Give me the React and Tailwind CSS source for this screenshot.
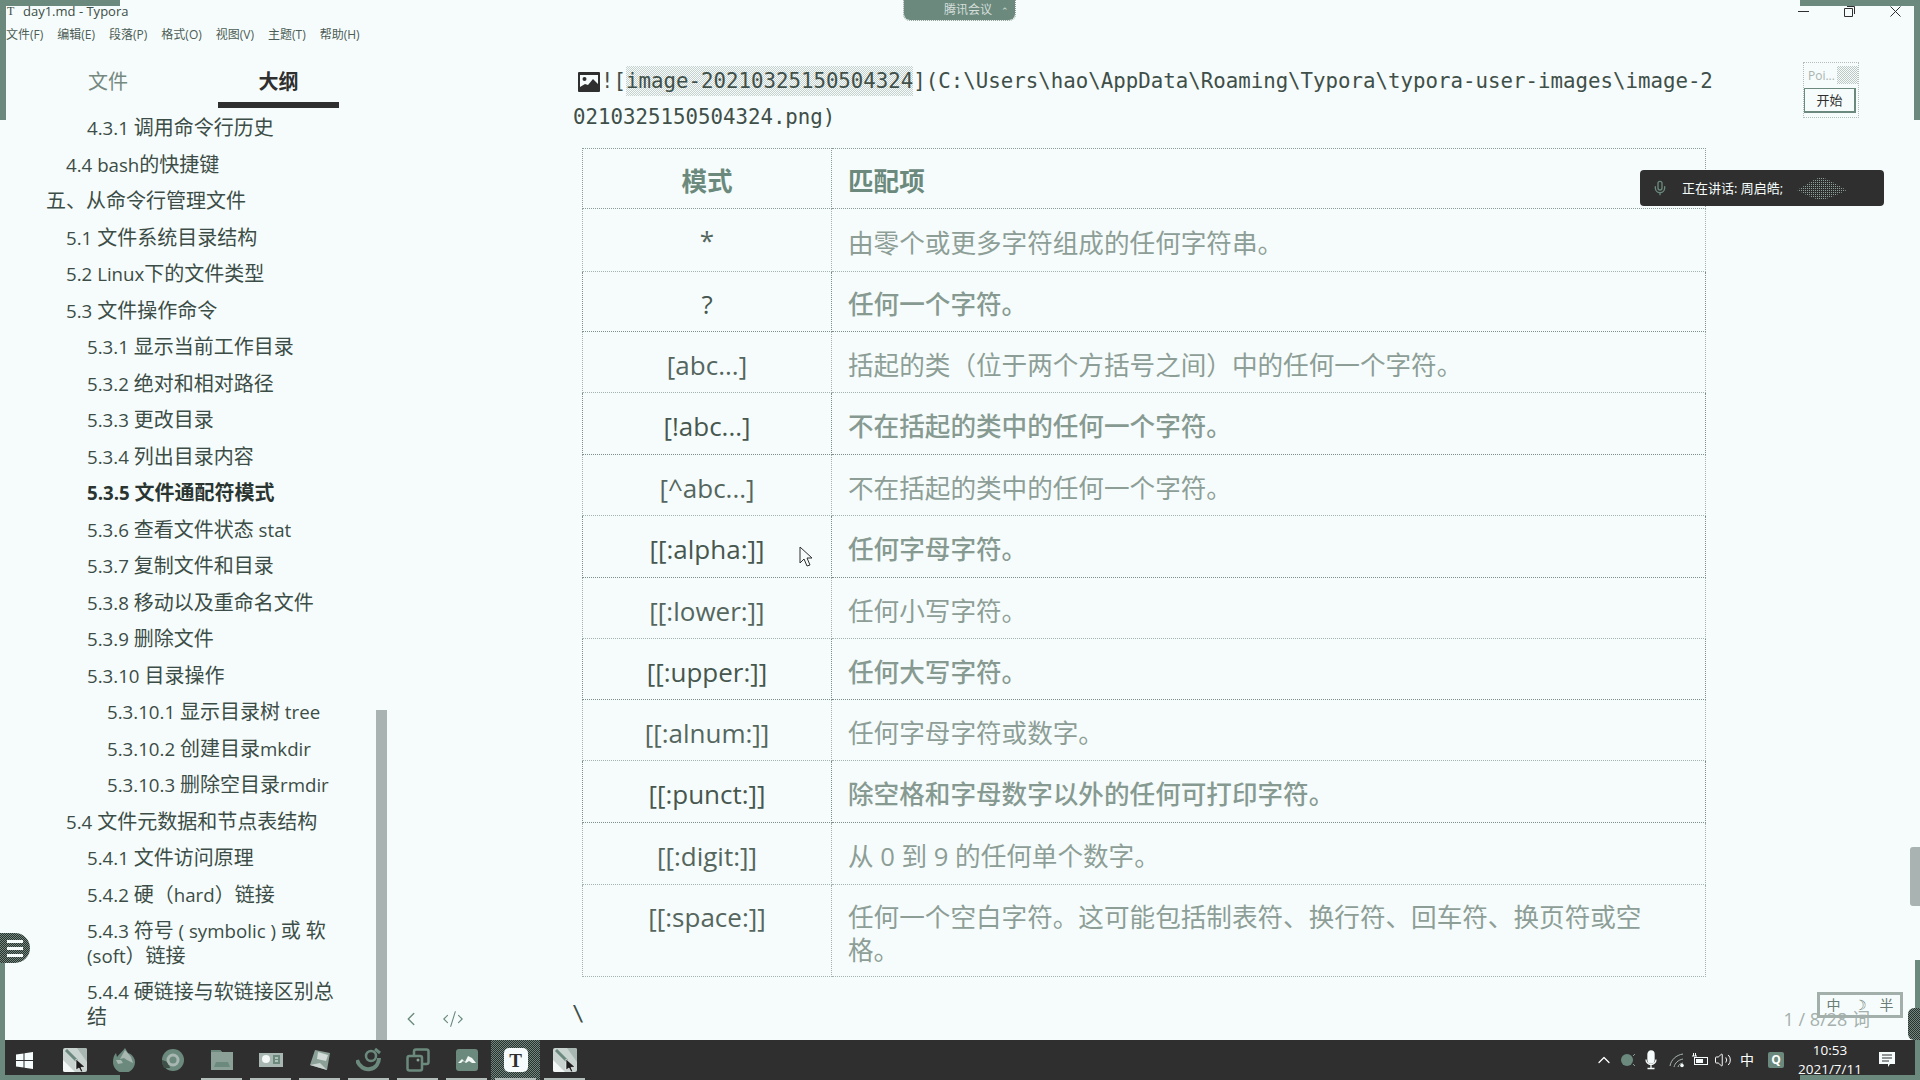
import React from "react";
import { ChevronLeft, ChevronUp, Code2, Mic, Volume2 } from "lucide-react";

const outline = [
  [87, "4.3.1 调用命令行历史"],
  [66, "4.4 bash的快捷键"],
  [46, "五、从命令行管理文件"],
  [66, "5.1 文件系统目录结构"],
  [66, "5.2 Linux下的文件类型"],
  [66, "5.3 文件操作命令"],
  [87, "5.3.1 显示当前工作目录"],
  [87, "5.3.2 绝对和相对路径"],
  [87, "5.3.3 更改目录"],
  [87, "5.3.4 列出目录内容"],
  [87, "5.3.5 文件通配符模式", true],
  [87, "5.3.6 查看文件状态 stat"],
  [87, "5.3.7 复制文件和目录"],
  [87, "5.3.8 移动以及重命名文件"],
  [87, "5.3.9 删除文件"],
  [87, "5.3.10 目录操作"],
  [107, "5.3.10.1 显示目录树 tree"],
  [107, "5.3.10.2 创建目录mkdir"],
  [107, "5.3.10.3 删除空目录rmdir"],
  [66, "5.4 文件元数据和节点表结构"],
  [87, "5.4.1 文件访问原理"],
  [87, "5.4.2 硬（hard）链接"],
  [87, "5.4.3 符号 ( symbolic ) 或 软 (soft）链接"],
  [87, "5.4.4 硬链接与软链接区别总结"],
];

const rows = [
  ["*", "由零个或更多字符组成的任何字符串。", "h-[63px]"],
  ["?", "任何一个字符。", "h-[60px]", true],
  ["[abc...]", "括起的类（位于两个方括号之间）中的任何一个字符。", "h-[61px]"],
  ["[!abc...]", "不在括起的类中的任何一个字符。", "h-[62px]", true],
  ["[^abc...]", "不在括起的类中的任何一个字符。", "h-[61px]"],
  ["[[:alpha:]]", "任何字母字符。", "h-[62px]", true],
  ["[[:lower:]]", "任何小写字符。", "h-[61px]"],
  ["[[:upper:]]", "任何大写字符。", "h-[61px]", true],
  ["[[:alnum:]]", "任何字母字符或数字。", "h-[61px]"],
  ["[[:punct:]]", "除空格和字母数字以外的任何可打印字符。", "h-[62px]", true],
  ["[[:digit:]]", "从 0 到 9 的任何单个数字。", "h-[62px]"],
  ["[[:space:]]", "任何一个空白字符。这可能包括制表符、换行符、回车符、换页符或空格。", "h-[92px]"],
];

const menus = ["文件(F)", "编辑(E)", "段落(P)", "格式(O)", "视图(V)", "主题(T)", "帮助(H)"];

const dither = "bg-[repeating-conic-gradient(#6b8a7d_0_25%,#2f2f2f_0_50%)] bg-[length:2px_2px]";

// latin runs in the outline are set a bit smaller than the CJK around them
const OutlineLabel = ({ text }) =>
  text.split(/([\x20-\x7e]+)/).map((part, i) =>
    /^[\x20-\x7e]+$/.test(part) ? (
      <span key={i} className="text-[18.700px] leading-none">{part}</span>
    ) : (
      part
    )
  );

const SnipIcon = () => (
  <svg width="24" height="24" viewBox="0 0 24 24">
    <rect width="24" height="24" rx="2" fill="#c9d3cf" />
    <path d="M0 12L12 24H2a2 2 0 0 1-2-2z" fill="#f4f8f7" />
    <path d="M14 0h8a2 2 0 0 1 2 2v12z" fill="#a9b7b2" />
    <path d="M3 2L14 13" stroke="#6b8a7d" strokeWidth="3" />
    <path d="M13 11l9 8-4 .5 2 4-2 .5-2-4-3 2z" fill="#1f1f1f" stroke="#fff" strokeWidth=".6" />
  </svg>
);

const FoxIcon = () => (
  <svg width="24" height="24" viewBox="0 0 24 24">
    <path d="M13 0l3 5c4 1 7 5 7 9a11 11 0 0 1-22 0c0-4 1-7 3-9l1 4c2-3 5-5 8-9z" fill="#6b8a7d" />
    <path d="M13 2l6 7 2 6-6-3-3-2-4 1z" fill="#a9b7b2" />
    <path d="M4 12l5 0 2 3-5 1z" fill="#a9b7b2" />
  </svg>
);

const ChromeIcon = () => (
  <svg width="24" height="24" viewBox="0 0 24 24">
    <circle cx="12" cy="12" r="11" fill="#6b8a7d" />
    <path d="M3 20a11 11 0 0 1-2-8l6 2 2 6z" fill="#3f5048" />
    <circle cx="12" cy="12" r="6.500" fill="#a9b7b2" />
    <circle cx="12" cy="12" r="3.500" fill="#6b8a7d" />
  </svg>
);

const FolderIcon = () => (
  <svg width="24" height="24" viewBox="0 0 24 24">
    <path d="M1 2h9l2 2h11v18H1z" fill="#8ba096" />
    <path d="M1 2h9l2 2H1z" fill="#6b8a7d" />
    <path d="M6 14h12l2 5H4z" fill="#6b8a7d" />
  </svg>
);

const CardIcon = () => (
  <svg width="24" height="24" viewBox="0 0 24 24">
    <rect y="5" width="24" height="14" fill="#a9b7b2" />
    <circle cx="7" cy="11" r="4" fill="#f4f8f7" />
    <rect x="14" y="7" width="7" height="9" fill="#6b8a7d" />
    <path d="M16 10h3M16 13h3" stroke="#f4f8f7" />
  </svg>
);

const NoteIcon = () => (
  <svg width="24" height="24" viewBox="0 0 24 24">
    <path d="M7 2l15 3-3 17L2 17z" fill="#8ba096" />
    <path d="M10 4l10 3-2 6-9-2z" fill="#d3dcd8" />
    <path d="M2 17l10-2 7 7z" fill="#c9d3cf" />
  </svg>
);

const SpiralIcon = () => (
  <svg width="26" height="26" viewBox="0 0 26 26" fill="none" stroke="#6b8a7d">
    <path d="M1 13c2 7 8 10 13 9 6-1 9-6 9-11" strokeWidth="4" />
    <circle cx="15" cy="9" r="5" strokeWidth="2.500" />
    <path d="M19 2l5 4" strokeWidth="3" />
  </svg>
);

const StackIcon = () => (
  <svg width="24" height="24" viewBox="0 0 24 24" fill="none" stroke="#6b8a7d" strokeWidth="2.500">
    <rect x="8" y="1.500" width="14.500" height="14.500" rx="2" />
    <rect x="1.500" y="8" width="14.500" height="14.500" rx="2" fill="#2f2f2f" />
    <circle cx="12" cy="12" r="1.500" fill="#8ba096" stroke="none" />
  </svg>
);

const PeakIcon = () => (
  <svg width="22" height="22" viewBox="0 0 22 22">
    <rect width="22" height="22" rx="3" fill="#6b8a7d" />
    <path d="M2 14l4-4 3 3 3-6 4 2 4 5-4 0-3-2-3 2-3-2-2 2z" fill="#f4f8f7" />
  </svg>
);

const TypeIcon = () => (
  <div className="flex h-[24px] w-[24px] items-center justify-center rounded-[5px] bg-[#f6fcfb] font-['Liberation_Serif',serif] text-[19px] font-bold leading-none text-[#2f2f2f]">
    T
  </div>
);

const apps = [
  { icon: <SnipIcon /> },
  { icon: <FoxIcon /> },
  { icon: <ChromeIcon /> },
  { icon: <FolderIcon />, mark: true },
  { icon: <CardIcon />, mark: true },
  { icon: <NoteIcon />, mark: true },
  { icon: <SpiralIcon />, mark: true },
  { icon: <StackIcon />, mark: true },
  { icon: <PeakIcon />, mark: true },
  { icon: <TypeIcon />, mark: true, active: true },
  { icon: <SnipIcon />, mark: true },
];

const App = () => {
  return (
    <div className="relative flex h-screen w-[1920px] flex-col overflow-hidden bg-[#f6fcfb] font-['Open_Sans','Noto_Sans_CJK_SC',sans-serif] text-[#3c4d47]">
      {/* title bar */}
      <div className="flex h-[24px] items-center pb-[2px] pl-[7px] text-[13px] leading-none">
        <span className="w-[16px] font-['Liberation_Serif',serif] text-[12px]">T</span>
        <span>day1.md - Typora</span>
        <div className="ml-auto flex pr-[2px] text-[#2f2f2f]">
          <span className="flex h-[20px] w-[46px] items-center justify-center">
            <svg width="11" height="11" viewBox="0 0 11 11"><path d="M0 5.500h11" stroke="currentColor" /></svg>
          </span>
          <span className="flex h-[20px] w-[46px] items-center justify-center">
            <svg width="11" height="11" viewBox="0 0 11 11" fill="none" stroke="currentColor"><path d="M.5 2.500h8v8h-8zM3 .5h7.500V8" /></svg>
          </span>
          <span className="flex h-[20px] w-[46px] items-center justify-center">
            <svg width="11" height="11" viewBox="0 0 11 11" stroke="currentColor"><path d="M.5.5l10 10M10.500.5l-10 10" /></svg>
          </span>
        </div>
      </div>
      <div className="flex h-[22px] items-center gap-[14px] pl-[6px] text-[12px] leading-none text-[#4c5c56]">
        {menus.map((m) => (
          <span key={m}>{m}</span>
        ))}
      </div>

      <div className="flex min-h-0 flex-1">
        {/* sidebar */}
        <aside className="flex w-[376px] shrink-0 flex-col overflow-hidden">
          <div className="flex shrink-0 pl-[48px] text-[20px] leading-none">
            <div className="flex h-[62px] w-[120px] items-center justify-center pt-[16px] pb-[6px] text-[#75897f]">文件</div>
            <div className="ml-[50px] flex h-[62px] w-[121px] items-center justify-center border-b-[6px] border-[#2f2f2f] pt-[16px] font-bold text-[#2f2f2f]">大纲</div>
          </div>
          <ul className="pt-[8px] pr-[40px] text-[20px] leading-[24.5px]">
            {outline.map(([indent, label, bold]) => (
              <li
                key={label}
                style={{ paddingLeft: indent }}
                className={bold ? "mb-[12px] font-bold text-[#2a3531]" : "mb-[12px]"}
              >
                <OutlineLabel text={label} />
              </li>
            ))}
          </ul>
        </aside>
        <div className="flex w-[11px] shrink-0 flex-col justify-end">
          <div className="h-[330px] bg-[#a9b3b1]" />
        </div>

        {/* editor */}
        <main className="flex min-w-0 flex-1 flex-col">
          <div className="min-h-0 flex-1 pt-[17px] pl-[186px]">
            <p className="w-[1145px] break-all font-['DejaVu_Sans_Mono',monospace] text-[20.750px] leading-[36px] text-[#3f4f49]">
              <svg className="mr-[1px] ml-[5px] inline-block align-[-4px]" width="22" height="20" viewBox="0 0 22 20">
                <rect width="22" height="20" rx="1" fill="#2f2f2f" />
                <rect x="2" y="3" width="18" height="12" fill="#f6fcfb" />
                <circle cx="6.500" cy="7" r="2" fill="#2f2f2f" />
                <path d="M2 15l5-3 3 1 5-6 5 5v3z" fill="#2f2f2f" />
              </svg>
              ![
              <span className="bg-[repeating-conic-gradient(#c6d0cc_0_25%,#f6fcfb_0_50%)] bg-[length:2px_2px] py-[3px]">image-20210325150504324</span>
              ](C:\Users\hao\AppData\Roaming\Typora\typora-user-images\image-20210325150504324.png)
            </p>
            <table className="mt-[13px] ml-[9px] w-[1124px] table-fixed border-collapse">
              <colgroup>
                <col className="w-[249px]" />
                <col />
              </colgroup>
              <thead>
                <tr className="h-[60px] text-[25.600px] leading-[33px]">
                  <th className="border border-dotted border-[#8d9c96] pt-[6px] font-bold text-[#6b8a7d]">模式</th>
                  <th className="border border-dotted border-[#8d9c96] pt-[6px] pl-[16px] text-left font-bold text-[#6b8a7d]">匹配项</th>
                </tr>
              </thead>
              <tbody>
                {rows.map(([pattern, desc, height, strong], i) => (
                  <tr key={pattern} className={`${height} text-[25.600px] leading-[33px]`}>
                    <td className={strong ? "border border-dotted border-[#7f8f88] pt-[6px] text-center text-[26px] font-medium text-[#46574f]" : i === rows.length - 1 ? "border border-dotted border-[#a5b2ad] pt-[16px] text-center align-top text-[26px] text-[#55665f]" : i === 0 ? "border border-dotted border-[#a5b2ad] text-center text-[26px] text-[#55665f]" : "border border-dotted border-[#a5b2ad] pt-[6px] text-center text-[26px] text-[#55665f]"}>
                      {pattern}
                    </td>
                    <td className={strong ? "border border-dotted border-[#7f8f88] pt-[6px] pr-[40px] pl-[16px] font-medium text-[#879a92]" : "border border-dotted border-[#a5b2ad] pt-[6px] pr-[40px] pl-[16px] text-[#8d9e97]"}>
                      {desc}
                    </td>
                  </tr>
                ))}
              </tbody>
            </table>
          </div>
          <footer className="flex h-[42px] shrink-0 items-center text-[#6b8a7d]">
            <ChevronLeft className="ml-[13px]" size={22} strokeWidth={1.500} />
            <Code2 className="ml-[20px]" size={22} strokeWidth={1.200} />
            <span className="ml-[108px] -translate-y-[5px] font-['DejaVu_Sans_Mono',monospace] text-[20.750px] leading-none text-[#3f4f49]">\</span>
            <span className="mr-[40px] ml-auto text-[18px] leading-none text-[#a5b0ad]">1 / 8/28 词</span>
          </footer>
        </main>

        <div className="w-[10px] shrink-0 pt-[801px]">
          <div className="h-[59px] rounded-l-[3px] bg-[#a9b3b1]" />
        </div>
      </div>

      {/* taskbar */}
      <div className="flex h-[40px] shrink-0 items-center bg-[#2f2f2f] text-white">
        <div className="flex w-[50px] shrink-0 justify-center">
          <svg className="-translate-x-[1px]" width="17" height="17" viewBox="0 0 17 17" fill="#f6fcfb">
            <path d="M0 2.500l7.500-1v6.500H0zM8.500 1.300L17 0v8H8.500zM0 9h7.500v6.500l-7.500-1zM8.500 9H17v8l-8.500-1.300z" />
          </svg>
        </div>
        {apps.map((app, i) => (
          <div key={i} className={app.active ? `relative flex h-full w-[49px] shrink-0 items-center justify-center ${dither}` : "relative flex h-full w-[49px] shrink-0 items-center justify-center"}>
            {app.icon}
            {app.mark && <span className="absolute bottom-0 left-[4px] h-[2px] w-[41px] bg-[#b3bdb9]" />}
          </div>
        ))}
        <div className="ml-auto flex h-full items-center">
          <ChevronUp size={20} strokeWidth={1.500} className="mr-[6px]" />
          <svg className="mr-[5px]" width="16" height="14" viewBox="0 0 16 14">
            <circle cx="7" cy="7" r="6" fill="#6b8a7d" />
            <path d="M13 3l2-2M13 11l2 2" stroke="#8ba096" />
          </svg>
          <svg className="mr-[8px]" width="20" height="20" viewBox="0 0 20 20" fill="none" stroke="#f6fcfb" strokeWidth="1.300">
            <rect x="7" y="1" width="6" height="12" rx="3" fill="#f6fcfb" />
            <path d="M5 9.500a5 5 0 0 0 10 0M10 15v3M6.500 18.500h7" />
          </svg>
          <svg className="mr-[7px]" width="16" height="15" viewBox="0 0 16 15" fill="none" stroke="#a9b7b2">
            <path d="M1 13c1-6 6-11 13-12M5 14c1-4 4-7 9-8M9 14c.5-2 2-3.500 5-4" />
            <circle cx="13" cy="12.500" r="1.800" fill="#f6fcfb" stroke="none" />
          </svg>
          <svg className="mr-[6px]" width="16" height="14" viewBox="0 0 16 14" fill="none" stroke="#f6fcfb">
            <rect x="2.500" y="4.500" width="13" height="7" />
            <rect x="4" y="6" width="7" height="4" fill="#f6fcfb" stroke="none" />
            <path d="M0 3h5M1.500 0v3M3.500 0v3" />
          </svg>
          <Volume2 size={18} strokeWidth={1.300} className="mr-[8px]" />
          <span className="mr-[14px] w-[14px] text-[14px] leading-none">中</span>
          <div className="mr-[16px] flex h-[16px] w-[16px] items-center justify-center rounded-[2px] bg-[#6b8a7d] text-[12px] font-bold leading-none">Q</div>
          <div className="mr-[19px] flex w-[60px] flex-col items-center whitespace-nowrap text-[13.500px] leading-[19px]">
            <span>10:53</span>
            <span>2021/7/11</span>
          </div>
          <svg className="mr-[25px]" width="16" height="16" viewBox="0 0 16 16">
            <path d="M0 0h16v12h-5l-2 3v-3H0z" fill="#f6fcfb" />
            <path d="M3 3h10M3 6h10M3 9h7" stroke="#2f2f2f" />
          </svg>
        </div>
      </div>

      {/* screen recorder corner marks */}
      <div className="absolute top-0 left-0 h-[6px] w-[120px] bg-[#6b8a7d]" />
      <div className="absolute top-0 left-0 h-[120px] w-[6px] bg-[#6b8a7d]" />
      <div className="absolute top-0 right-0 h-[6px] w-[120px] bg-[#6b8a7d]" />
      <div className="absolute top-0 right-0 h-[120px] w-[6px] bg-[#6b8a7d]" />
      <div className="absolute bottom-0 left-0 h-[120px] w-[5px] bg-[#6b8a7d]" />
      <div className="absolute bottom-0 left-0 h-[5px] w-[120px] bg-[#6b8a7d]" />
      <div className="absolute right-0 bottom-0 h-[5px] w-[120px] bg-[#6b8a7d]" />
      <div className="absolute right-0 bottom-0 h-[120px] w-[5px] bg-[#6b8a7d]" />

      {/* meeting pill */}
      <div className="absolute top-0 left-[904px] flex h-[20px] w-[111px] items-center rounded-b-[6px] bg-[#6b8a7d] pl-[40px] text-[12px] leading-none text-[#d5dedb] outline-1 outline-dotted outline-[#8d9c96]">
        腾讯会议
        <span className="ml-[9px] text-[9px]">⌃</span>
      </div>

      {/* speaking toast */}
      <div className="absolute top-[170px] left-[1640px] flex h-[36px] w-[244px] items-center rounded-[4px] bg-[#2f2f2f] pl-[12px] text-[13px] leading-none text-[#f6fcfb]">
        <Mic size={16} className="text-[#6b8a7d]" />
        <span className="ml-[14px]">正在讲话: 周启皓;</span>
        <svg className="ml-[14px]" width="50" height="28" viewBox="0 0 50 28">
          <defs>
            <pattern id="dots" width="2" height="2" patternUnits="userSpaceOnUse">
              <rect width="1" height="1" fill="#8ba096" />
            </pattern>
          </defs>
          <path d="M0 16C8 12 14 6 24 3c10 3 18 9 26 13-8 4-16 8-26 10C14 24 8 20 0 16z" fill="url(#dots)" />
        </svg>
      </div>

      {/* pointer widget */}
      <div className="absolute top-[62px] left-[1803px] h-[56px] w-[56px] border border-dotted border-[#b3bdb9]">
        <div className="flex h-[25px] items-center pl-[4px] text-[12px] leading-none text-[#a9b3b1]">Poi...</div>
        <div className="absolute top-[3px] right-0 h-[18px] w-[21px] bg-[repeating-conic-gradient(#bdc8c4_0_25%,#f6fcfb_0_50%)] bg-[length:2px_2px]" />
        <div className="flex h-[25px] w-[52px] items-center justify-center border border-r-2 border-b-2 border-[#6b8a7d] bg-[#f6fcfb] text-[13px] leading-none text-[#2f2f2f]">开始</div>
      </div>

      {/* ime bar */}
      <div className="absolute top-[992px] left-[1817px] flex h-[26px] w-[86px] items-center justify-around border-[3px] border-[#a3afaa] text-[14px] leading-none text-[#6b7d76]">
        <span>中</span>
        <span>☽</span>
        <span>半</span>
      </div>

      {/* outline toggle */}
      <div className={`absolute top-[933px] left-0 flex h-[30px] w-[30px] flex-col items-center justify-center gap-[4px] rounded-r-full ${dither}`}>
        <span className="h-[3px] w-[16px] bg-[#f6fcfb]" />
        <span className="h-[3px] w-[16px] bg-[#f6fcfb]" />
        <span className="h-[3px] w-[16px] bg-[#f6fcfb]" />
      </div>

      {/* bottom right thumb */}
      <div className={`absolute top-[1008px] right-0 h-[32px] w-[12px] rounded-l-[6px] ${dither}`} />

      {/* mouse cursor */}
      <svg className="absolute top-[546px] left-[799px]" width="14" height="21" viewBox="0 0 14 21">
        <path d="M1 1v16l4-4 3 7 3-1-3-7h5z" fill="#f6fcfb" stroke="#2f2f2f" />
      </svg>
    </div>
  );
};

export default App;
